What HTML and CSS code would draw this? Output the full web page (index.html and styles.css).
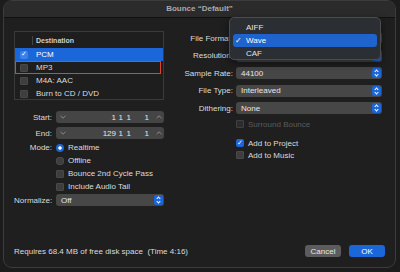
FILE: index.html
```html
<!DOCTYPE html>
<html lang="en">
<head>
    <meta charset="UTF-8">
    <title>Bounce “Default”</title>
    <link rel="stylesheet" href="styles.css">
</head>
<body>
    <div class="window">
        <div class="titlebar">Bounce “Default”</div>

        <div class="main">
            <div class="col-left">
                <div class="dest-table">
                    <div class="dest-head"><span class="head-sep"></span>Destination</div>
                    <div class="dest-row selected"><span class="cb on">✓</span>PCM</div>
                    <div class="dest-row marked"><span class="cb"></span>MP3</div>
                    <div class="dest-row"><span class="cb"></span>M4A: AAC</div>
                    <div class="dest-row"><span class="cb"></span>Burn to CD / DVD</div>
                </div>

                <div class="form-row row-start">
                    <span class="label">Start:</span>
                    <div class="pos-field">
                        <svg class="chev" viewBox="0 0 6 4"><polyline points="0.5,0.8 3,3.2 5.5,0.8"/></svg>
                        <span class="seg s1">1</span><span class="seg s2">1</span><span class="seg s3">1</span><span class="seg s4">1</span>
                        <svg class="chev up" viewBox="0 0 6 4"><polyline points="0.5,3.2 3,0.8 5.5,3.2"/></svg>
                    </div>
                </div>
                <div class="form-row row-end">
                    <span class="label">End:</span>
                    <div class="pos-field">
                        <svg class="chev" viewBox="0 0 6 4"><polyline points="0.5,0.8 3,3.2 5.5,0.8"/></svg>
                        <span class="seg s1">129</span><span class="seg s2">1</span><span class="seg s3">1</span><span class="seg s4">1</span>
                        <svg class="chev up" viewBox="0 0 6 4"><polyline points="0.5,3.2 3,0.8 5.5,3.2"/></svg>
                    </div>
                </div>

                <div class="form-row row-mode">
                    <span class="label">Mode:</span>
                    <span class="radio on"></span>Realtime
                </div>
                <div class="form-row opt">
                    <span class="label"></span>
                    <span class="radio"></span>Offline
                </div>
                <div class="form-row opt">
                    <span class="label"></span>
                    <span class="cb"></span>Bounce 2nd Cycle Pass
                </div>
                <div class="form-row opt">
                    <span class="label"></span>
                    <span class="cb"></span>Include Audio Tail
                </div>
                <div class="form-row row-normalize">
                    <span class="label">Normalize:</span>
                    <div class="popup">Off<span class="stepper"></span></div>
                </div>
            </div>

            <div class="col-right">
                <!-- first two popups sit under the open menu -->
                <div class="form-row pop-row">
                    <span class="label">File Format:</span>
                    <div class="popup"><span class="stepper"></span></div>
                </div>
                <div class="form-row pop-row">
                    <span class="label">Resolution:</span>
                    <div class="popup"><span class="stepper"></span></div>
                </div>
                <div class="form-row pop-row">
                    <span class="label">Sample Rate:</span>
                    <div class="popup">44100<span class="stepper"></span></div>
                </div>
                <div class="form-row pop-row">
                    <span class="label">File Type:</span>
                    <div class="popup">Interleaved<span class="stepper"></span></div>
                </div>
                <div class="form-row pop-row">
                    <span class="label">Dithering:</span>
                    <div class="popup">None<span class="stepper"></span></div>
                </div>
                <div class="form-row check-row disabled row-surround">
                    <span class="label"></span>
                    <span class="cb"></span>Surround Bounce
                </div>
                <div class="form-row check-row row-project">
                    <span class="label"></span>
                    <span class="cb on">✓</span>Add to Project
                </div>
                <div class="form-row check-row">
                    <span class="label"></span>
                    <span class="cb"></span>Add to Music
                </div>
            </div>
        </div>

        <div class="footer">
            <span class="space-info">Requires 68.4 MB of free disk space&nbsp; (Time 4:16)</span>
            <button class="btn">Cancel</button>
            <button class="btn primary">OK</button>
        </div>

        <!-- open File Format menu -->
        <div class="menu">
            <div class="menu-item">AIFF</div>
            <div class="menu-item active"><span class="tick">✓</span>Wave</div>
            <div class="menu-item">CAF</div>
        </div>
    </div>
</body>
</html>
```

FILE: styles.css
```css
:root {
    --bg: #1c1c1c;
    --window: #1f1f1f;
    --title: #2b2b2b;
    --text: #dcdcdc;
    --field: #474747;
    --blue: #1b66d8;
    --check: #3e3e3e;
}

body {
    margin: 0;
    background-color: var(--bg);
    font-family: 'Liberation Sans', Arial, sans-serif;
    font-size: 8px;
    color: var(--text);
}

.window {
    position: relative;
    margin-left: 3px;
    width: 393px;
    height: 268px;
    box-sizing: border-box;
    border: 1px solid #3c3c3c;
    border-radius: 9px;
    background-color: var(--window);
    display: flex;
    flex-direction: column;
    overflow: hidden;
}

.titlebar {
    height: 16px;
    line-height: 16px;
    background-color: var(--title);
    border-bottom: 1px solid #111;
    text-align: center;
    font-weight: bold;
    color: #a9a9a9;
}

.main {
    flex: 1;
    display: flex;
    padding: 13px 10px 0 10px;
}

.col-left {
    width: 150px;
    display: flex;
    flex-direction: column;
}

.col-right {
    width: 211px;
    margin-left: 7px;
    display: flex;
    flex-direction: column;
    padding-top: 1px;
}

/* destination list */
.dest-table {
    border: 1px solid #3a3a3a;
    background-color: #1e1e1e;
    height: 69px;
    box-sizing: border-box;
}

.dest-head {
    height: 16px;
    display: flex;
    align-items: center;
    padding-left: 17px;
    font-size: 7px;
    font-weight: bold;
    color: #cfcfcf;
}

.head-sep {
    width: 1px;
    height: 9px;
    background-color: #444;
    margin-right: 3px;
}

.dest-row {
    height: 13px;
    display: flex;
    align-items: center;
    padding-left: 5px;
    box-sizing: border-box;
}

.dest-row .cb {
    margin-right: 8px;
}

.dest-row.selected {
    background-color: var(--blue);
    color: #fff;
}

.dest-row.selected .cb {
    background-color: #3a82ea;
}

.dest-row.marked {
    outline: 1.5px solid #e0432b;
    outline-offset: -1px;
    margin-right: 2px;
}

/* controls */
.form-row {
    display: flex;
    align-items: center;
}

.form-row .label {
    width: 38px;
    text-align: right;
    margin-right: 4px;
    flex-shrink: 0;
}

.col-right .form-row .label {
    width: 62px;
    margin-right: 3px;
}

.row-start { margin-top: 11px; }
.row-end { margin-top: 4px; }
.row-mode { margin-top: 2px; height: 13px; }
.opt { height: 13px; }
.row-normalize { margin-top: 1px; }

.pop-row + .pop-row { margin-top: 5.5px; }
.check-row { height: 12px; }
.row-surround { margin-top: 4px; }
.row-project { margin-top: 7px; }

.opt .cb, .opt .radio, .row-mode .radio, .check-row .cb {
    margin-right: 4px;
}

.disabled {
    color: #5b5b5b;
}

.disabled .cb {
    background-color: #2c2c2c;
}

.cb {
    width: 8px;
    height: 8px;
    border-radius: 2px;
    background-color: var(--check);
    box-shadow: inset 0 0 0 0.5px #555;
    flex-shrink: 0;
    display: inline-flex;
    align-items: center;
    justify-content: center;
    font-size: 7px;
    line-height: 1;
    color: #fff;
    font-family: 'DejaVu Sans', sans-serif;
}

.cb.on {
    background-color: var(--blue);
    box-shadow: none;
}

.radio {
    width: 8px;
    height: 8px;
    border-radius: 50%;
    background-color: var(--check);
    box-shadow: inset 0 0 0 0.5px #555;
    flex-shrink: 0;
    box-sizing: border-box;
}

.radio.on {
    border: 2.5px solid var(--blue);
    background-clip: padding-box;
    background-color: #fff;
    box-shadow: none;
}

.pos-field {
    width: 108px;
    height: 12px;
    box-sizing: border-box;
    background-color: #454545;
    border-radius: 3px;
    display: flex;
    align-items: center;
    padding: 0 2px 0 4px;
}

.chev {
    width: 6px;
    height: 4px;
    fill: none;
    stroke: #8e8e8e;
    stroke-width: 0.9;
    flex-shrink: 0;
}

.chev.up {
    margin-left: 7px;
}

.seg {
    text-align: right;
    color: #e6e6e6;
}

.s1 { width: 50px; }
.s2 { width: 7px; }
.s3 { width: 8px; }
.s4 { width: 18px; }

.popup {
    flex: 1;
    height: 12px;
    box-sizing: border-box;
    background-color: var(--field);
    border-radius: 3px;
    display: flex;
    align-items: center;
    padding: 0 1px 0 5px;
    color: #e8e8e8;
}

.stepper {
    margin-left: auto;
    width: 9px;
    height: 10px;
    border-radius: 2.5px;
    background-color: var(--blue);
    position: relative;
}

.stepper::before,
.stepper::after {
    content: '';
    position: absolute;
    left: 3px;
    width: 2px;
    height: 2px;
    border-left: 1px solid #fff;
    border-top: 1px solid #fff;
}

.stepper::before {
    top: 2px;
    transform: rotate(45deg);
}

.stepper::after {
    bottom: 2px;
    transform: rotate(225deg);
}

/* footer */
.footer {
    display: flex;
    align-items: center;
    padding: 0 10px 10px 10px;
}

.space-info {
    margin-right: auto;
}

.btn {
    width: 36px;
    height: 12px;
    padding: 0;
    border: none;
    border-radius: 3px;
    background-color: #5c5c5c;
    color: #e8e8e8;
    font-family: 'Liberation Sans', Arial, sans-serif;
    font-size: 8px;
}

.btn.primary {
    margin-left: 8px;
    background-color: var(--blue);
    color: #fff;
}

/* open popup menu */
.menu {
    position: absolute;
    left: 225px;
    top: 16px;
    width: 152px;
    height: 43px;
    box-sizing: border-box;
    padding-top: 3px;
    background-color: #2b2e33;
    border: 1px solid #4a4c50;
    border-radius: 5px;
    box-shadow: 0 3px 8px rgba(0,0,0,0.5);
}

.menu-item {
    height: 13px;
    display: flex;
    align-items: center;
    padding-left: 13px;
    margin: 0 3px;
    border-radius: 3px;
    color: #e4e4e4;
}

.menu-item.active {
    background-color: #1f63cc;
    color: #fff;
    padding-left: 2px;
}

.tick {
    width: 11px;
    font-family: 'DejaVu Sans', sans-serif;
    font-size: 8px;
}
```
